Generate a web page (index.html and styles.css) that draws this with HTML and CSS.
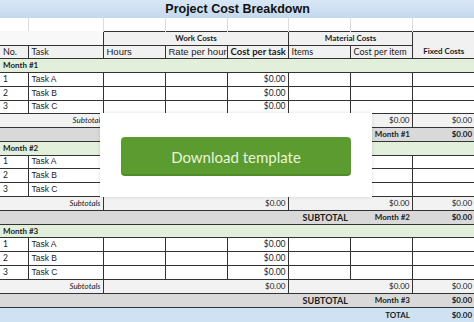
FILE: index.html
```html
<!DOCTYPE html>
<html>
<head>
<meta charset="utf-8">
<title>Project Cost Breakdown</title>
<link rel="stylesheet" href="styles.css">
</head>
<body>
<table class="sheet">
  <colgroup>
    <col class="c-no"><col class="c-task"><col class="c-hours"><col class="c-rate">
    <col class="c-cpt"><col class="c-items"><col class="c-cpi"><col class="c-fixed">
  </colgroup>
  <tr class="title-row"><td colspan="8" class="title">Project Cost Breakdown</td></tr>
  <tr class="blank short"><td></td><td></td><td></td><td></td><td></td><td></td><td></td><td></td></tr>
  <tr class="head1">
    <td colspan="2" class="hd-empty"></td>
    <td colspan="3" class="grp">Work Costs</td>
    <td colspan="2" class="grp">Material Costs</td>
    <td rowspan="2" class="grp fixed">Fixed Costs</td>
  </tr>
  <tr class="head2 short">
    <td class="hd first">No.</td>
    <td class="hd">Task</td>
    <td class="hd ari">Hours</td>
    <td class="hd ari">Rate per hour</td>
    <td class="hd cpt">Cost per task</td>
    <td class="hd">Items</td>
    <td class="hd">Cost per item</td>
  </tr>

  <tr class="month-row"><td colspan="8" class="month">Month #1</td></tr>
  <tr class="task"><td class="first">1</td><td class="tname">Task A</td><td></td><td></td><td class="num">$0.00</td><td></td><td></td><td class="last"></td></tr>
  <tr class="task"><td class="first">2</td><td class="tname">Task B</td><td></td><td></td><td class="num">$0.00</td><td></td><td></td><td class="last"></td></tr>
  <tr class="task short"><td class="first">3</td><td class="tname">Task C</td><td></td><td></td><td class="num">$0.00</td><td></td><td></td><td class="last"></td></tr>
  <tr class="sub-row"><td colspan="2" class="sub-label sep">Subtotal</td><td colspan="3" class="num sep">$0.00</td><td colspan="2" class="num sep">$0.00</td><td class="num">$0.00</td></tr>
  <tr class="gray-row"><td colspan="6" class="num big">SUBTOTAL</td><td class="num">Month #1</td><td class="num">$0.00</td></tr>

  <tr class="month-row"><td colspan="8" class="month">Month #2</td></tr>
  <tr class="task short"><td class="first">1</td><td class="tname">Task A</td><td></td><td></td><td class="num">$0.00</td><td></td><td></td><td class="last"></td></tr>
  <tr class="task"><td class="first">2</td><td class="tname">Task B</td><td></td><td></td><td class="num">$0.00</td><td></td><td></td><td class="last"></td></tr>
  <tr class="task"><td class="first">3</td><td class="tname">Task C</td><td></td><td></td><td class="num">$0.00</td><td></td><td></td><td class="last"></td></tr>
  <tr class="sub-row"><td colspan="2" class="sub-label sep">Subtotals</td><td colspan="3" class="num sep">$0.00</td><td colspan="2" class="num sep">$0.00</td><td class="num">$0.00</td></tr>
  <tr class="gray-row"><td colspan="6" class="num big">SUBTOTAL</td><td class="num">Month #2</td><td class="num">$0.00</td></tr>

  <tr class="month-row short"><td colspan="8" class="month">Month #3</td></tr>
  <tr class="task"><td class="first">1</td><td class="tname">Task A</td><td></td><td></td><td class="num">$0.00</td><td></td><td></td><td class="last"></td></tr>
  <tr class="task"><td class="first">2</td><td class="tname">Task B</td><td></td><td></td><td class="num">$0.00</td><td></td><td></td><td class="last"></td></tr>
  <tr class="task"><td class="first">3</td><td class="tname">Task C</td><td></td><td></td><td class="num">$0.00</td><td></td><td></td><td class="last"></td></tr>
  <tr class="sub-row"><td colspan="2" class="sub-label sep">Subtotals</td><td colspan="3" class="num sep">$0.00</td><td colspan="2" class="num sep">$0.00</td><td class="num">$0.00</td></tr>
  <tr class="gray-row"><td colspan="6" class="num big">SUBTOTAL</td><td class="num">Month #3</td><td class="num">$0.00</td></tr>

  <tr class="total-row"><td colspan="7" class="num">TOTAL</td><td class="num">$0.00</td></tr>
</table>

<div class="overlay">
  <a class="dl-btn" href="#">Download template</a>
</div>
</body>
</html>
```
FILE: styles.css
```css
html, body {
  margin: 0;
  padding: 0;
  background: #fff;
}
body {
  width: 474px;
  height: 322px;
  overflow: hidden;
  position: relative;
  font-family: Lato, "Liberation Sans", sans-serif;
}

.sheet {
  border-collapse: collapse;
  table-layout: fixed;
  width: 474px;
  color: #1c1c1c;
}
.c-no { width: 28px; }
.c-task { width: 75px; }
.c-hours { width: 62px; }
.c-rate { width: 62px; }
.c-cpt { width: 61px; }
.c-items { width: 62px; }
.c-cpi { width: 62px; }
.c-fixed { width: 62px; }

.sheet tr { height: 14px; }
.sheet tr.short { height: 13px; }
.sheet tr.title-row { height: 18px; }
.sheet tr.total-row { height: 15px; }

.sheet td {
  padding: 0 2px 0 3px;
  line-height: 1;
  white-space: nowrap;
  overflow: hidden;
  font-size: 8px;
  vertical-align: middle;
}

.sheet td.title {
  background: linear-gradient(#d8e7f5, #c4d9ee);
  text-align: center;
  font-family: "Liberation Sans", Arial, sans-serif;
  font-weight: bold;
  font-size: 12.5px;
  color: #111;
}

.blank td { border-right: 1px solid #dcdcdc; }

.hd-empty { background: #f8f8f8; }
.grp {
  background: #f1f1f1;
  border: 1px solid #333;
  font-weight: bold;
  text-align: center;
}
.sheet td.fixed {
  vertical-align: bottom;
  padding-bottom: 3px;
  border-right: none;
}
.sheet td.hd {
  background: #f1f1f1;
  border: 1px solid #333;
  font-size: 9px;
}
.sheet td.hd.first { border-left: none; }
.sheet td.hd.ari {
  font-family: "Liberation Sans", Arial, sans-serif;
  font-size: 9.5px;
}
.sheet td.hd.cpt {
  font-weight: bold;
  font-size: 9.5px;
}

.month {
  background: #e2efda;
  font-weight: bold;
  border-top: 1px solid #333;
  border-bottom: 1px solid #333;
}

.task td {
  background: #fff;
  border: 1px solid #333;
  font-size: 8.5px;
}
.task td.first { border-left: none; }
.task td.last { border-right: none; }
.task td.tname {
  font-family: "Liberation Sans", Arial, sans-serif;
}

.sheet td.num {
  text-align: right;
  padding-right: 2px;
}

.sub-row td {
  background: #f2f2f2;
  border-top: 1px solid #333;
  border-bottom: 1px solid #333;
}
.sub-row td.sep { border-right: 1px solid #333; }
.sub-label {
  text-align: right;
  font-style: italic;
}

.gray-row td {
  background: #d9d9d9;
  border-top: 1px solid #333;
  border-bottom: 1px solid #333;
  font-weight: bold;
}
.gray-row td.big { font-size: 9px; }

.total-row td {
  background: #cfe2f3;
  border-top: 1px solid #333;
  font-weight: bold;
}

.overlay {
  position: absolute;
  left: 100px;
  top: 113px;
  width: 272px;
  height: 84px;
  box-sizing: border-box;
  padding-top: 24px;
  background: #fff;
  box-shadow: 0 0 4px rgba(0, 0, 0, 0.12);
  display: flex;
  justify-content: center;
  align-items: flex-start;
}
.dl-btn {
  width: 230px;
  height: 39px;
  border-radius: 4px;
  background: #5c9b2f;
  box-shadow: inset 0 -2px 0 rgba(0, 0, 0, 0.1);
  color: #e8f5da;
  font: 15px Lato, sans-serif;
  text-decoration: none;
  display: flex;
  align-items: center;
  justify-content: center;
}
```
